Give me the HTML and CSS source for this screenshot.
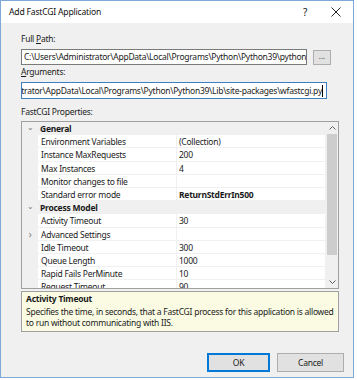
FILE: index.html
```html
<!DOCTYPE html>
<html lang="en">
<head>
  <meta charset="UTF-8">
  <title>Add FastCGI Application</title>
  <link rel="stylesheet" href="styles.css">
</head>
<body>
  <div class="window">
    <div class="titlebar">
      <span class="title">Add FastCGI Application</span>
      <span class="help">?</span>
      <span class="close">
        <svg width="10" height="10" viewBox="0 0 10 10"><path d="M0.5 0.5 L9.5 9.5 M9.5 0.5 L0.5 9.5" stroke="#222" stroke-width="1" fill="none"/></svg>
      </span>
    </div>

    <div class="content">
      <div class="label label-path">Full <u>P</u>ath:</div>
      <div class="path-row">
        <div class="textbox textbox-path">C:\Users\Administrator\AppData\Local\Programs\Python\Python39\python</div>
        <div class="browse">...</div>
      </div>

      <div class="label label-args"><u>A</u>rguments:</div>
      <div class="textbox textbox-args"><span class="args-text">C:\Users\Administrator\AppData\Local\Programs\Python\Python39\Lib\site-packages\wfastcgi.py</span><span class="caret"></span></div>

      <div class="label label-props">FastCGI Properties:</div>
      <div class="grid">
        <div class="grid-rows">
          <div class="cat"><span class="chev">&#8964;</span><span class="cat-name">General</span></div>
          <div class="prop"><span class="margin"></span><span class="name">Environment Variables</span><span class="value">(Collection)</span></div>
          <div class="prop"><span class="margin"></span><span class="name">Instance MaxRequests</span><span class="value">200</span></div>
          <div class="prop"><span class="margin"></span><span class="name">Max Instances</span><span class="value">4</span></div>
          <div class="prop"><span class="margin"></span><span class="name">Monitor changes to file</span><span class="value"></span></div>
          <div class="prop"><span class="margin"></span><span class="name">Standard error mode</span><span class="value bold">ReturnStdErrIn500</span></div>
          <div class="cat"><span class="chev">&#8964;</span><span class="cat-name">Process Model</span></div>
          <div class="prop"><span class="margin"></span><span class="name">Activity Timeout</span><span class="value">30</span></div>
          <div class="prop"><span class="margin"><span class="expand">&#8250;</span></span><span class="name">Advanced Settings</span><span class="value"></span></div>
          <div class="prop"><span class="margin"></span><span class="name">Idle Timeout</span><span class="value">300</span></div>
          <div class="prop"><span class="margin"></span><span class="name">Queue Length</span><span class="value">1000</span></div>
          <div class="prop"><span class="margin"></span><span class="name">Rapid Fails PerMinute</span><span class="value">10</span></div>
          <div class="prop"><span class="margin"></span><span class="name">Request Timeout</span><span class="value">90</span></div>
        </div>
        <div class="scrollbar">
          <div class="arrow">
            <svg width="7" height="4" viewBox="0 0 7 4"><path d="M0.5 3.5 L3.5 0.5 L6.5 3.5" stroke="#606060" fill="none"/></svg>
          </div>
          <div class="thumb"></div>
          <div class="track"></div>
          <div class="arrow">
            <svg width="7" height="4" viewBox="0 0 7 4"><path d="M0.5 0.5 L3.5 3.5 L6.5 0.5" stroke="#606060" fill="none"/></svg>
          </div>
        </div>
      </div>

      <div class="desc">
        <div class="desc-title">Activity Timeout</div>
        <div class="desc-text">Specifies the time, in seconds, that a FastCGI process for this application is allowed to run without communicating with IIS.</div>
      </div>

      <div class="buttons">
        <div class="btn btn-ok">OK</div>
        <div class="btn btn-cancel">Cancel</div>
      </div>
    </div>
  </div>
</body>
</html>
```

FILE: styles.css
```css
body {
  margin: 0;
  background: #fff;
  font-family: "Segoe UI", "Noto Sans", sans-serif;
  font-size: 8.5px;
  letter-spacing: -0.25px;
  color: #1a1a1a;
}

.window {
  width: 352px;
  height: 376px;
  border: 1px solid #7ea9d6;
  background: #f0f0f0;
  display: flex;
  flex-direction: column;
}

.titlebar {
  height: 22px;
  background: #fff;
  display: flex;
  align-items: center;
  font-size: 8.6px;
  letter-spacing: -0.2px;
  color: #111;
}

.title {
  flex: 1;
  padding-left: 8px;
}

.help {
  width: 32px;
  text-align: center;
  font-size: 10px;
}

.close {
  width: 30px;
  display: flex;
  justify-content: center;
  margin-right: 2px;
}

.content {
  padding-left: 20px;
  display: flex;
  flex-direction: column;
}

.label {
  height: 12px;
  line-height: 12px;
}

.label u {
  text-decoration-thickness: 1px;
  text-underline-offset: 1px;
}

.label-path {
  margin-top: 10px;
}

.path-row {
  display: flex;
  margin-top: 4px;
}

.textbox {
  box-sizing: border-box;
  height: 16px;
  line-height: 14px;
  border: 1px solid #7a7a7a;
  background: #fff;
  padding-left: 2px;
  white-space: nowrap;
  overflow: hidden;
}

.textbox-path {
  width: 286px;
}

.browse {
  box-sizing: border-box;
  width: 18px;
  height: 15px;
  margin-left: 6px;
  margin-top: 1px;
  border: 1px solid #adadad;
  background: #e1e1e1;
  text-align: center;
  line-height: 10px;
  font-size: 8px;
  letter-spacing: 0;
  color: #444;
}

.label-args {
  margin-top: 1px;
}

.textbox-args {
  width: 306px;
  height: 17px;
  line-height: 15px;
  margin-top: 4px;
  border-color: #3d7fc0;
  padding-left: 0;
  display: flex;
  justify-content: flex-end;
}

.args-text {
  flex-shrink: 0;
}

.caret {
  width: 1px;
  height: 12px;
  margin-top: 2px;
  margin-right: 3px;
  background: #000;
  flex-shrink: 0;
}

.label-props {
  margin-top: 7px;
}

.grid {
  box-sizing: border-box;
  width: 318px;
  height: 168px;
  margin-top: 3px;
  border: 1px solid #a0a0a0;
  display: flex;
  overflow: hidden;
  background: #f0f0f0;
}

.grid-rows {
  flex: 1;
  overflow: hidden;
}

.cat,
.prop {
  box-sizing: border-box;
  height: 13.2px;
  line-height: 13px;
  display: flex;
}

.cat {
  background: #f0f0f0;
  font-weight: bold;
}

.chev {
  width: 16px;
  text-align: center;
  font-weight: normal;
  color: #777;
  font-size: 8px;
  line-height: 9px;
}

.cat-name {
  padding-left: 2px;
}

.prop .margin {
  width: 16px;
  flex-shrink: 0;
  text-align: center;
  color: #888;
}

.expand {
  font-size: 11px;
  line-height: 12px;
}

.prop .name,
.prop .value {
  background: #fff;
  border-bottom: 1px solid #f0f0f0;
  white-space: nowrap;
  overflow: hidden;
}

.prop .name {
  width: 135px;
  padding-left: 3px;
  border-right: 1px solid #f0f0f0;
}

.prop .value {
  flex: 1;
  padding-left: 2px;
}

.bold {
  font-weight: bold;
}

.scrollbar {
  width: 12px;
  display: flex;
  flex-direction: column;
  background: #f0f0f0;
  border-left: 1px solid #f0f0f0;
}

.arrow {
  height: 12px;
  display: flex;
  align-items: center;
  justify-content: center;
}

.thumb {
  height: 121px;
  margin: 0 1px;
  background: #cdcdcd;
}

.track {
  flex: 1;
}

.desc {
  box-sizing: border-box;
  width: 318px;
  height: 41px;
  margin-top: 2px;
  border: 1px solid #a0a0a0;
  background: #fbfbe4;
  padding: 1px 4px 0 4px;
  line-height: 11px;
}

.desc-title {
  font-weight: bold;
}

.desc-text {
  margin-top: 2px;
}

.buttons {
  display: flex;
  justify-content: flex-end;
  gap: 7px;
  margin-top: 21px;
  padding-right: 9px;
}

.btn {
  box-sizing: border-box;
  width: 63px;
  height: 19px;
  line-height: 17px;
  border: 1px solid #adadad;
  background: #e1e1e1;
  text-align: center;
}

.btn-cancel {
  width: 67px;
}

.btn-ok {
  border: 1px solid #0078d7;
  box-shadow: inset 0 0 0 1px #0078d7;
}
```
